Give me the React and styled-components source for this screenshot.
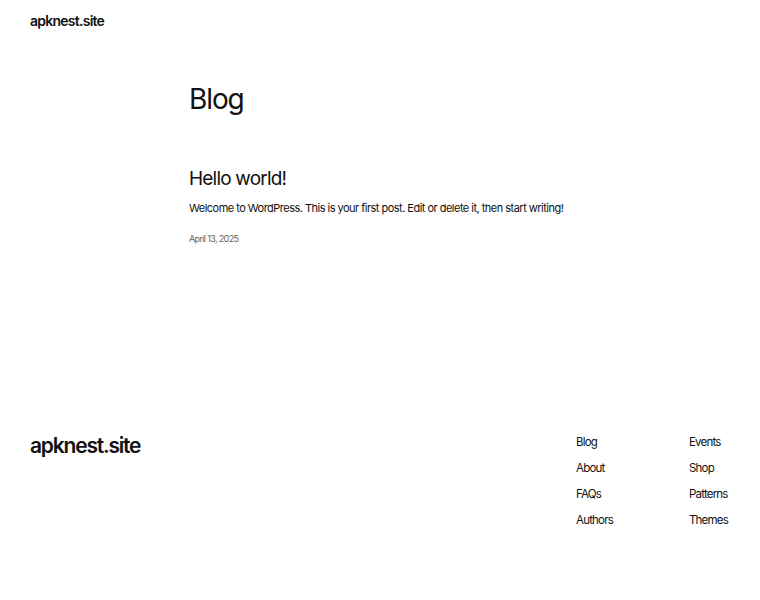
import React from "react";
import styled, { createGlobalStyle } from "styled-components";

const GlobalStyle = createGlobalStyle`
  * { box-sizing: border-box; }
  body {
    margin: 0;
    background: #ffffff;
    color: #111111;
    font-family: Inter, "Noto Sans", "DejaVu Sans", sans-serif;
  }
  a { color: inherit; text-decoration: none; }
`;

const Page = styled.div`
  display: flex;
  flex-direction: column;
  min-height: 600px;
`;

const Header = styled.header`
  padding: 11px 30px 0;
`;

const SiteTitle = styled.a`
  display: block;
  font-size: ${({ $large }) => ($large ? "21px" : "14px")};
  line-height: ${({ $large }) => ($large ? "26px" : "20px")};
  font-weight: 600;
  letter-spacing: ${({ $large }) => ($large ? "-1.2px" : "-0.75px")};
`;

const Main = styled.main`
  width: 382px;
  margin: 51px auto 0;
`;

const PageTitle = styled.h1`
  margin: 0;
  font-size: 28px;
  line-height: 34px;
  font-weight: 400;
  letter-spacing: -1.1px;
`;

const Post = styled.article`
  margin-top: 51px;
`;

const PostTitle = styled.h2`
  margin: 0;
  font-size: 19px;
  line-height: 24px;
  font-weight: 400;
  letter-spacing: -0.8px;
`;

const Excerpt = styled.p`
  margin: 9px 0 0;
  font-size: 11px;
  line-height: 16px;
  letter-spacing: -0.52px;
  white-space: nowrap;
`;

const PostDate = styled.time`
  display: block;
  margin-top: 16px;
  font-size: 9px;
  line-height: 13px;
  letter-spacing: -0.65px;
  color: #5f5f5f;
`;

const Footer = styled.footer`
  display: flex;
  justify-content: space-between;
  align-items: flex-start;
  margin-top: 188px;
  padding: 0 30px;
`;

const FooterNav = styled.nav`
  display: grid;
  grid-template-columns: 113px 1fr;
  width: 154px;
  margin-top: 1px;
`;

const NavColumn = styled.ul`
  display: flex;
  flex-direction: column;
  gap: 10px;
  margin: 0;
  padding: 0;
  list-style: none;
`;

const NavLink = styled.a`
  display: block;
  font-size: 11.5px;
  line-height: 16px;
  letter-spacing: -0.8px;
  white-space: nowrap;
`;

const columns = [
  ["Blog", "About", "FAQs", "Authors"],
  ["Events", "Shop", "Patterns", "Themes"],
];

export default function App() {
  return (
    <Page>
      <GlobalStyle />
      <Header>
        <SiteTitle href="#">apknest.site</SiteTitle>
      </Header>

      <Main>
        <PageTitle>Blog</PageTitle>
        <Post>
          <PostTitle>
            <a href="#">Hello world!</a>
          </PostTitle>
          <Excerpt>
            Welcome to WordPress. This is your first post. Edit or delete it, then start writing!
          </Excerpt>
          <PostDate>April 13, 2025</PostDate>
        </Post>
      </Main>

      <Footer>
        <SiteTitle href="#" $large>
          apknest.site
        </SiteTitle>
        <FooterNav>
          {columns.map((items, i) => (
            <NavColumn key={i}>
              {items.map(label => (
                <li key={label}>
                  <NavLink href="#">{label}</NavLink>
                </li>
              ))}
            </NavColumn>
          ))}
        </FooterNav>
      </Footer>
    </Page>
  );
}
